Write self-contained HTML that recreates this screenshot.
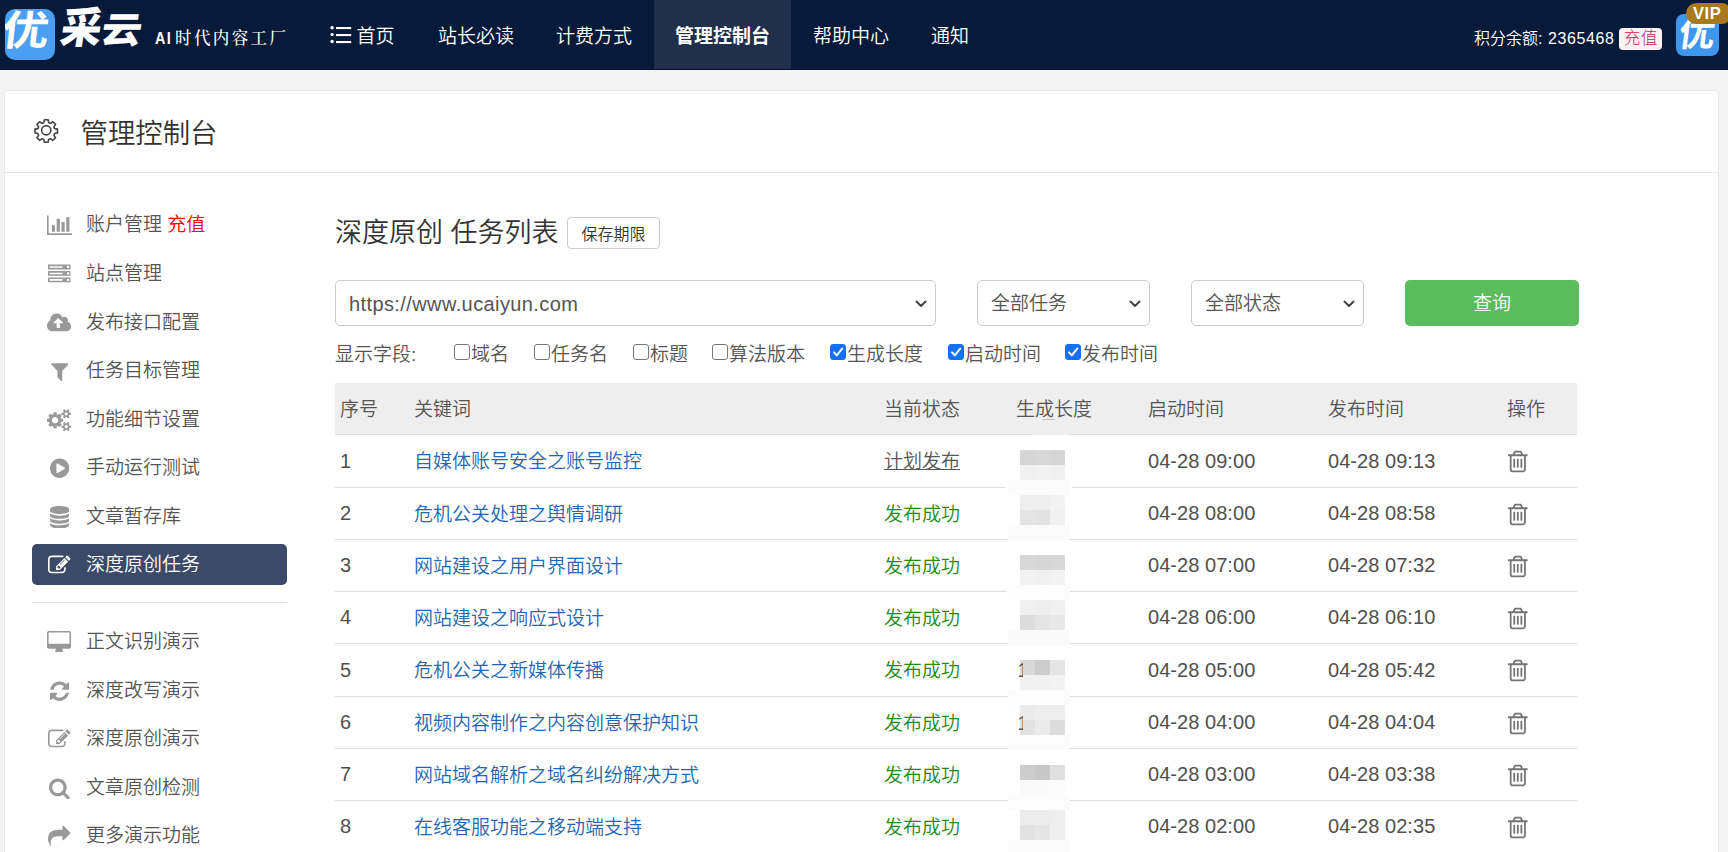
<!DOCTYPE html>
<html lang="zh-CN">
<head>
<meta charset="utf-8">
<title>管理控制台</title>
<style>
*{box-sizing:border-box;}
html,body{margin:0;padding:0;}
body{font-weight:350;width:1728px;height:852px;overflow:hidden;background:#f3f3f3;font-family:"Liberation Sans","Noto Sans CJK SC",sans-serif;color:#333;position:relative;}
a{text-decoration:none;color:inherit;}
/* NAV */
#nav{position:absolute;left:0;top:0;width:1728px;height:70px;background:#081a39;border-bottom:1px solid #04102d;}
.brush{font-family:"Liberation Sans","Noto Sans CJK SC",sans-serif;font-weight:900;color:#fff;white-space:nowrap;}
#logo-box{position:absolute;left:5px;top:9px;width:49.5px;height:51px;border-radius:10px;background:#4a9ff2;overflow:hidden;}
#logo-box span{position:absolute;left:0.3px;top:-8.5px;font-size:41px;font-weight:700;line-height:60px;transform:skewX(-6deg) scaleX(1.14);transform-origin:50% 50%;}
#lt1{position:absolute;left:56px;top:-0.5px;font-size:41px;line-height:60px;transform:skewX(-9deg) scaleY(1.04);transform-origin:0 100%;}
#lt2{position:absolute;left:96.5px;top:0.5px;font-size:36px;line-height:60px;transform:skewX(-9deg) scaleX(1.12);transform-origin:0 100%;}
#slogan{position:absolute;left:155px;top:27.5px;color:#fff;font-family:"Liberation Serif","Noto Serif CJK SC",serif;font-weight:500;font-size:16.5px;line-height:22px;letter-spacing:2.4px;white-space:nowrap;}
#slogan span{display:inline-block;width:20px;font-size:16px;font-family:"Liberation Sans",sans-serif;font-weight:bold;letter-spacing:1.6px;transform:scaleX(0.9);transform-origin:0 50%;}
.nv{position:absolute;top:0;height:69px;line-height:69px;padding-top:1.6px;color:#fff;font-size:19px;white-space:nowrap;}
.nv.act{background:#1f2f4c;font-weight:bold;text-align:center;}
#menuic{position:absolute;left:330px;top:25px;width:22px;height:20px;}
#bal{position:absolute;left:1474px;top:25px;color:#fff;font-size:16px;line-height:28px;white-space:nowrap;}
#bal span{letter-spacing:0.6px;margin-left:1px;}
#cz{position:absolute;left:1619.2px;top:28px;width:42.8px;height:21.7px;border-radius:4px;background:#f9f2f4;color:#c7254e;font-size:16.5px;font-weight:300;line-height:21.7px;text-align:center;letter-spacing:0.6px;padding-left:0.6px;}
#ava{position:absolute;left:1676.3px;top:13.7px;width:42.4px;height:42.6px;border-radius:8px;background:#3e97ee;overflow:hidden;}
#ava span{position:absolute;left:3px;top:-8px;font-size:36px;font-weight:700;line-height:56px;transform:skewX(-7deg);}
#vip{position:absolute;left:1686px;top:2.7px;width:46px;height:21.3px;border-radius:11px;background:#a87a1c;color:#fff;font-size:16.5px;font-weight:bold;line-height:21.3px;text-align:left;padding-left:7px;letter-spacing:0.6px;}
/* PANEL */
#panel{position:absolute;left:5px;top:91px;width:1713px;height:780px;background:#fff;box-shadow:0 0 0 1px #e8e8e8;border-radius:4px;}
#pg{position:absolute;left:0;top:0;width:1728px;height:852px;overflow:hidden;}
#phead{position:absolute;left:5px;top:91px;width:1713px;height:82px;border-bottom:1px solid #e7e7e7;}
#gear{position:absolute;left:32.5px;top:116.8px;width:26.5px;height:26.5px;}
#ptitle{position:absolute;left:80.5px;top:113.8px;font-size:27.4px;line-height:40px;color:#333;white-space:nowrap;}
/* SIDEBAR */
.si{position:absolute;left:32px;width:255px;height:41px;border-radius:5px;font-size:19px;line-height:41px;color:#555;white-space:nowrap;}
.si span.t{position:absolute;left:54px;top:0;}
.ic{position:absolute;fill:#999;}
.si.act{background:#3a4a68;color:#fff;}
.si.act svg{fill:#fff;}
.si .red{color:#f00;}
#shr{position:absolute;left:32px;top:601.5px;width:255px;height:1px;background:#ddd;}
/* MAIN */
#mt{position:absolute;left:335px;top:213px;font-size:27px;line-height:40px;color:#333;white-space:nowrap;}
#bx{position:absolute;left:567px;top:217px;width:93px;height:32px;border:1px solid #ccc;border-radius:4px;font-size:16px;line-height:33px;text-align:center;color:#333;background:#fff;}
.sel{position:absolute;top:280px;height:46px;border:1px solid #ccc;border-radius:5px;font-size:19px;line-height:46px;padding-left:13px;color:#555;background:#fff;white-space:nowrap;}
.sel svg{position:absolute;right:7.7px;top:17.7px;width:12px;height:10px;}
.lat{font-size:20px;letter-spacing:0.4px;}
#qbtn{position:absolute;left:1405px;top:280px;width:174px;height:46px;border-radius:5px;background:#5cbb5c;color:#fff;font-size:19px;line-height:48.5px;text-align:center;}
#flds{position:absolute;left:335px;top:340px;height:30px;font-size:19px;line-height:30px;color:#555;white-space:nowrap;}
#flds span{position:absolute;top:0;}
.cb{position:absolute;top:4px;width:16px;height:16px;border:1.5px solid #767676;border-radius:3px;background:#fff;}
.cb.on{background:#1470f6;border-color:#1470f6;}
.cb.on svg{position:absolute;left:-0.5px;top:-0.5px;width:14px;height:14px;}
/* TABLE */
#th{position:absolute;left:335px;top:383px;width:1242px;height:52px;background:#eee;border-bottom:1px solid #ddd;font-size:19px;line-height:53px;color:#555;}
.tr{position:absolute;left:335px;width:1242px;border-bottom:1px solid #ddd;font-size:19px;color:#444;}
.c{position:absolute;top:0;white-space:nowrap;}
.c1{left:5px;}.c2{left:79px;}.c3{left:549px;}.c4{left:681px;}.c5{left:813px;}.c6{left:993px;}.c7{left:1172px;}
.tr .c2{color:#2466b2;}
.tr .c1,.tr .c5,.tr .c6{font-size:20px;letter-spacing:0.05px;color:#505050;margin-top:-1px;}
.ok{color:#1f8a14;}
.plan{color:#555;text-decoration:underline;}
.mz{position:absolute;}
</style>
</head>
<body>
<div id="nav">
  <div id="logo-box"><span class="brush">优</span></div>
  <div id="lt1" class="brush">采</div><div id="lt2" class="brush">云</div>
  <div id="slogan"><span>AI</span>时代内容工厂</div>
  <svg id="menuic" viewBox="0 0 22 20" fill="#fff"><circle cx="2.1" cy="2.7" r="1.7"/><circle cx="2.1" cy="9.6" r="1.7"/><circle cx="2.1" cy="16.5" r="1.7"/><rect x="6" y="2" width="15.2" height="2.1"/><rect x="6" y="9" width="15.2" height="2.1"/><rect x="6" y="16" width="15.2" height="2.1"/></svg>
  <div class="nv" style="left:356.5px">首页</div>
  <div class="nv" style="left:438px">站长必读</div>
  <div class="nv" style="left:556px">计费方式</div>
  <div class="nv act" style="left:654px;width:137px">管理控制台</div>
  <div class="nv" style="left:813px">帮助中心</div>
  <div class="nv" style="left:931px">通知</div>
  <div id="bal">积分余额: <span>2365468</span></div>
  <div id="cz">充值</div>
  <div id="ava"><span class="brush">优</span></div>
  <div id="vip">VIP</div>
</div>
<div id="panel"></div>
<div id="pg">
  <div id="phead"></div>
  <svg id="gear" viewBox="0 0 24 24" fill="none" stroke="#444" stroke-width="1.45"><circle cx="12" cy="12" r="4.2"/><path d="M10.3 2.5h3.4l.5 2.6 1.6.7 2.2-1.5 2.4 2.4-1.5 2.2.7 1.6 2.6.5v3.4l-2.6.5-.7 1.6 1.5 2.2-2.4 2.4-2.2-1.5-1.6.7-.5 2.6h-3.4l-.5-2.6-1.6-.7-2.2 1.5-2.4-2.4 1.5-2.2-.7-1.6-2.6-.5v-3.4l2.6-.5.7-1.6-1.5-2.2 2.4-2.4 2.2 1.5 1.6-.7z" stroke-linejoin="round"/></svg>
  <div id="ptitle">管理控制台</div>
  <div class="si" style="top:203.5px"><svg class="ic " style="left:14.54px;top:10.11px;width:25.71px;height:22.50px;" viewBox="0 -1536 2048 1792"><path transform="scale(1,-1)" d="M640 640H384V128H640ZM1024 1152H768V128H1024ZM2048 0H128V1408H0V-128H2048ZM1408 896H1152V128H1408ZM1792 1280H1536V128H1792Z"/></svg><span class="t">账户管理 <span class="red">充值</span></span></div>
<div class="si" style="top:252.5px"><svg class="ic " style="left:16.15px;top:10.11px;width:22.50px;height:22.50px;" viewBox="0 -1536 1792 1792"><path transform="scale(1,-1)" d="M128 128V256H1152V128ZM128 640V768H1152V640ZM1696 192C1696 139 1653 96 1600 96C1547 96 1504 139 1504 192C1504 245 1547 288 1600 288C1653 288 1696 245 1696 192ZM128 1152V1280H1152V1152ZM1696 704C1696 651 1653 608 1600 608C1547 608 1504 651 1504 704C1504 757 1547 800 1600 800C1653 800 1696 757 1696 704ZM1696 1216C1696 1163 1653 1120 1600 1120C1547 1120 1504 1163 1504 1216C1504 1269 1547 1312 1600 1312C1653 1312 1696 1269 1696 1216ZM1792 384H0V0H1792ZM1792 896H0V512H1792ZM1792 1408H0V1024H1792Z"/></svg><span class="t">站点管理</span></div>
<div class="si" style="top:301.5px"><svg class="ic " style="left:15.35px;top:10.11px;width:24.11px;height:22.50px;" viewBox="0 -1536 1920 1792"><path transform="scale(1,-1)" d="M1280 672C1280 655 1266 640 1248 640H1024V288C1024 271 1009 256 992 256H800C783 256 768 271 768 288V640H544C526 640 512 654 512 672C512 681 516 689 522 696L873 1047C879 1053 888 1056 896 1056C905 1056 913 1053 919 1047L1271 695C1277 689 1280 680 1280 672ZM1920 384C1920 562 1797 717 1623 758C1650 799 1664 847 1664 896C1664 1037 1549 1152 1408 1152C1347 1152 1288 1130 1242 1090C1163 1282 976 1408 768 1408C485 1408 256 1179 256 896C256 882 257 868 258 853C101 780 0 622 0 448C0 201 201 0 448 0H1536C1748 0 1920 172 1920 384Z"/></svg><span class="t">发布接口配置</span></div>
<div class="si" style="top:349.5px"><svg class="ic " style="left:18.56px;top:10.11px;width:17.68px;height:22.50px;" viewBox="0 -1536 1408 1792"><path transform="scale(1,-1)" d="M1403 1241C1393 1264 1370 1280 1344 1280H64C38 1280 15 1264 5 1241C-5 1217 0 1189 19 1171L512 678V192C512 175 519 159 531 147L787 -109C799 -122 815 -128 832 -128C840 -128 849 -126 857 -123C880 -113 896 -90 896 -64V678L1389 1171C1408 1189 1413 1217 1403 1241Z"/></svg><span class="t">任务目标管理</span></div>
<div class="si" style="top:398.5px"><svg class="ic " style="left:15.35px;top:10.11px;width:24.11px;height:22.50px;" viewBox="0 -1536 1920 1792"><path transform="scale(1,-1)" d="M896 640C896 499 781 384 640 384C499 384 384 499 384 640C384 781 499 896 640 896C781 896 896 781 896 640ZM1664 128C1664 58 1607 0 1536 0C1466 0 1408 57 1408 128C1408 198 1466 256 1536 256C1606 256 1664 198 1664 128ZM1664 1152C1664 1082 1607 1024 1536 1024C1466 1024 1408 1081 1408 1152C1408 1222 1466 1280 1536 1280C1606 1280 1664 1222 1664 1152ZM1280 731C1280 745 1270 758 1256 761L1104 784C1095 812 1083 839 1070 866C1098 905 1128 941 1157 980C1161 986 1164 992 1164 999C1164 1027 1046 1135 1020 1159C1014 1164 1007 1167 999 1167C992 1167 985 1165 979 1160L861 1071C837 1083 812 1094 786 1102L763 1255C761 1269 747 1280 733 1280H547C533 1280 521 1270 517 1256C504 1207 499 1152 494 1102C467 1093 442 1083 417 1070L302 1160C296 1164 289 1167 281 1167C252 1167 140 1046 120 1019C115 1013 113 1006 113 999C113 992 116 985 120 979C152 941 182 904 210 864C197 839 186 814 178 788L23 764C10 762 0 747 0 734V549C0 535 10 522 24 520L176 496C185 468 197 441 211 414C182 375 152 338 123 300C119 294 116 288 116 281C116 252 234 145 260 121C266 116 273 113 281 113C288 113 296 115 301 120L419 209C443 197 468 186 494 178L517 25C519 11 533 0 547 0H733C747 0 759 10 763 24C776 73 781 128 786 179C813 187 838 197 863 210L978 120C984 116 991 113 999 113C1028 113 1140 235 1160 262C1165 267 1167 274 1167 281C1167 289 1164 295 1160 301C1128 339 1098 376 1070 416C1083 441 1094 466 1102 492L1257 516C1270 518 1280 533 1280 546ZM1920 198C1920 213 1791 227 1771 229C1763 247 1753 265 1741 281C1750 301 1792 401 1792 419C1792 421 1791 424 1788 426C1776 433 1669 496 1664 496L1658 494C1624 460 1594 421 1566 382C1556 383 1546 384 1536 384C1526 384 1516 383 1506 382C1496 397 1421 496 1408 496C1403 496 1296 432 1284 426C1281 424 1280 421 1280 419C1280 402 1322 301 1331 281C1319 265 1309 247 1301 229C1281 227 1152 213 1152 198V58C1152 43 1281 29 1301 27C1309 8 1319 -9 1331 -25C1322 -45 1280 -146 1280 -163C1280 -165 1281 -168 1284 -170C1296 -177 1403 -241 1408 -241C1421 -241 1496 -141 1506 -126C1516 -127 1526 -128 1536 -128C1546 -128 1556 -127 1566 -126C1576 -141 1651 -241 1664 -241C1669 -241 1776 -177 1788 -170C1791 -168 1792 -166 1792 -163C1792 -145 1750 -45 1741 -25C1753 -9 1763 8 1771 27C1791 29 1920 43 1920 58ZM1920 1222C1920 1237 1791 1251 1771 1253C1763 1271 1753 1289 1741 1305C1750 1325 1792 1425 1792 1443C1792 1445 1791 1448 1788 1450C1776 1457 1669 1520 1664 1520L1658 1518C1624 1484 1594 1445 1566 1406C1556 1407 1546 1408 1536 1408C1526 1408 1516 1407 1506 1406C1496 1421 1421 1520 1408 1520C1403 1520 1296 1456 1284 1450C1281 1448 1280 1445 1280 1443C1280 1426 1322 1325 1331 1305C1319 1289 1309 1271 1301 1253C1281 1251 1152 1237 1152 1222V1082C1152 1067 1281 1053 1301 1051C1309 1032 1319 1015 1331 999C1322 979 1280 878 1280 861C1280 859 1281 856 1284 854C1296 847 1403 783 1408 783C1421 783 1496 883 1506 898C1516 897 1526 896 1536 896C1546 896 1556 897 1566 898C1576 883 1651 783 1664 783C1669 783 1776 847 1788 854C1791 856 1792 858 1792 861C1792 879 1750 979 1741 999C1753 1015 1763 1032 1771 1051C1791 1053 1920 1067 1920 1082Z"/></svg><span class="t">功能细节设置</span></div>
<div class="si" style="top:446.5px"><svg class="ic " style="left:17.76px;top:10.11px;width:19.29px;height:22.50px;" viewBox="0 -1536 1536 1792"><path transform="scale(1,-1)" d="M768 1408C344 1408 0 1064 0 640C0 216 344 -128 768 -128C1192 -128 1536 216 1536 640C1536 1064 1192 1408 768 1408ZM1152 585 608 265C598 259 587 256 576 256C565 256 554 259 544 264C524 276 512 297 512 320V960C512 983 524 1004 544 1016C564 1027 589 1027 608 1015L1152 695C1172 684 1184 663 1184 640C1184 617 1172 596 1152 585Z"/></svg><span class="t">手动运行测试</span></div>
<div class="si" style="top:495.5px"><svg class="ic " style="left:17.76px;top:10.11px;width:19.29px;height:22.50px;" viewBox="0 -1536 1536 1792"><path transform="scale(1,-1)" d="M768 768C467 768 165 822 0 938V768C0 627 344 512 768 512C1192 512 1536 627 1536 768V938C1371 822 1069 768 768 768ZM768 0C467 0 165 54 0 170V0C0 -141 344 -256 768 -256C1192 -256 1536 -141 1536 0V170C1371 54 1069 0 768 0ZM768 384C467 384 165 438 0 554V384C0 243 344 128 768 128C1192 128 1536 243 1536 384V554C1371 438 1069 384 768 384ZM768 1536C344 1536 0 1421 0 1280V1152C0 1011 344 896 768 896C1192 896 1536 1011 1536 1152V1280C1536 1421 1192 1536 768 1536Z"/></svg><span class="t">文章暂存库</span></div>
<div class="si act" style="top:544.0px"><svg class="ic " style="left:16.15px;top:10.11px;width:22.50px;height:22.50px;" viewBox="0 -1536 1792 1792"><path transform="scale(1,-1)" d="M888 352H832V448H736V504L852 620L1004 468ZM1328 1072C1337 1063 1336 1048 1327 1039L977 689C968 680 953 679 944 688C935 697 936 712 945 721L1295 1071C1304 1080 1319 1081 1328 1072ZM1408 478C1408 491 1400 502 1388 507C1376 512 1363 510 1353 500L1289 436C1283 430 1280 422 1280 414V288C1280 200 1208 128 1120 128H288C200 128 128 200 128 288V1120C128 1208 200 1280 288 1280H1120C1135 1280 1150 1278 1165 1274C1176 1270 1188 1273 1197 1282L1246 1331C1254 1339 1257 1349 1255 1360C1253 1370 1246 1379 1237 1383C1200 1400 1160 1408 1120 1408H288C129 1408 0 1279 0 1120V288C0 129 129 0 288 0H1120C1279 0 1408 129 1408 288ZM1312 1216 640 544V256H928L1600 928ZM1756 1084C1793 1121 1793 1183 1756 1220L1604 1372C1567 1409 1505 1409 1468 1372L1376 1280L1664 992L1756 1084Z"/></svg><span class="t">深度原创任务</span></div>
<div class="si" style="top:620.5px"><svg class="ic " style="left:15.35px;top:10.11px;width:24.11px;height:22.50px;" viewBox="0 -1536 1920 1792"><path transform="scale(1,-1)" d="M1792 544C1792 527 1777 512 1760 512H160C143 512 128 527 128 544V1376C128 1393 143 1408 160 1408H1760C1777 1408 1792 1393 1792 1376V544ZM1920 1376C1920 1464 1848 1536 1760 1536H160C72 1536 0 1464 0 1376V288C0 200 72 128 160 128H704C704 41 640 -27 640 -64C640 -99 669 -128 704 -128H1216C1251 -128 1280 -99 1280 -64C1280 -29 1216 43 1216 128H1760C1848 128 1920 200 1920 288Z"/></svg><span class="t">正文识别演示</span></div>
<div class="si" style="top:669.5px"><svg class="ic " style="left:17.76px;top:10.11px;width:19.29px;height:22.50px;" viewBox="0 -1536 1536 1792"><path transform="scale(1,-1)" d="M1511 480C1511 497 1497 512 1479 512H1287C1272 512 1262 503 1257 489C1240 449 1228 411 1204 372C1111 220 946 128 768 128C639 128 514 178 420 266L557 403C569 415 576 431 576 448C576 483 547 512 512 512H64C29 512 0 483 0 448V0C0 -35 29 -64 64 -64C81 -64 97 -57 109 -45L238 84C380 -51 569 -128 764 -128C1133 -128 1425 119 1510 473C1511 475 1511 478 1511 480ZM1536 1280C1536 1315 1507 1344 1472 1344C1455 1344 1439 1337 1427 1325L1297 1196C1155 1330 964 1408 768 1408C399 1408 104 1162 18 807C18 805 18 802 18 800C18 783 32 768 50 768H249C264 768 274 777 279 791C296 831 308 869 332 908C425 1060 590 1152 768 1152C897 1152 1022 1103 1117 1015L979 877C967 865 960 849 960 832C960 797 989 768 1024 768H1472C1507 768 1536 797 1536 832Z"/></svg><span class="t">深度改写演示</span></div>
<div class="si" style="top:717.5px"><svg class="ic " style="left:16.15px;top:10.11px;width:22.50px;height:22.50px;" viewBox="0 -1536 1792 1792"><path transform="scale(1,-1)" d="M888 352H832V448H736V504L852 620L1004 468ZM1328 1072C1337 1063 1336 1048 1327 1039L977 689C968 680 953 679 944 688C935 697 936 712 945 721L1295 1071C1304 1080 1319 1081 1328 1072ZM1408 478C1408 491 1400 502 1388 507C1376 512 1363 510 1353 500L1289 436C1283 430 1280 422 1280 414V288C1280 200 1208 128 1120 128H288C200 128 128 200 128 288V1120C128 1208 200 1280 288 1280H1120C1135 1280 1150 1278 1165 1274C1176 1270 1188 1273 1197 1282L1246 1331C1254 1339 1257 1349 1255 1360C1253 1370 1246 1379 1237 1383C1200 1400 1160 1408 1120 1408H288C129 1408 0 1279 0 1120V288C0 129 129 0 288 0H1120C1279 0 1408 129 1408 288ZM1312 1216 640 544V256H928L1600 928ZM1756 1084C1793 1121 1793 1183 1756 1220L1604 1372C1567 1409 1505 1409 1468 1372L1376 1280L1664 992L1756 1084Z"/></svg><span class="t">深度原创演示</span></div>
<div class="si" style="top:766.5px"><svg class="ic " style="left:16.95px;top:10.11px;width:20.89px;height:22.50px;" viewBox="0 -1536 1664 1792"><path transform="scale(1,-1)" d="M1152 704C1152 457 951 256 704 256C457 256 256 457 256 704C256 951 457 1152 704 1152C951 1152 1152 951 1152 704ZM1664 -128C1664 -94 1650 -61 1627 -38L1284 305C1365 422 1408 562 1408 704C1408 1093 1093 1408 704 1408C315 1408 0 1093 0 704C0 315 315 0 704 0C846 0 986 43 1103 124L1446 -218C1469 -242 1502 -256 1536 -256C1606 -256 1664 -198 1664 -128Z"/></svg><span class="t">文章原创检测</span></div>
<div class="si" style="top:814.5px"><svg class="ic " style="left:16.15px;top:10.11px;width:22.50px;height:22.50px;" viewBox="0 -1536 1792 1792"><path transform="scale(1,-1)" d="M1792 896C1792 913 1785 929 1773 941L1261 1453C1249 1465 1233 1472 1216 1472C1181 1472 1152 1443 1152 1408V1152H928C600 1152 192 1094 53 749C11 643 0 528 0 416C0 276 70 93 127 -35C138 -58 149 -90 164 -111C171 -121 178 -128 192 -128C212 -128 224 -112 224 -93C224 -77 220 -59 219 -43C216 -2 214 39 214 80C214 557 497 640 928 640H1152V384C1152 349 1181 320 1216 320C1233 320 1249 327 1261 339L1773 851C1785 863 1792 879 1792 896Z"/></svg><span class="t">更多演示功能</span></div>
<div id="shr"></div>
  <div id="mt">深度原创 任务列表</div><div id="bx">保存期限</div>
<div class="sel" style="left:335px;width:601px"><span class="lat">https://www.ucaiyun.com</span><svg viewBox="0 0 12 10"><path d="M1.5 2.5 L6 7 L10.5 2.5" fill="none" stroke="#444" stroke-width="2" stroke-linecap="round" stroke-linejoin="round"/></svg></div>
<div class="sel" style="left:977px;width:173px">全部任务<svg viewBox="0 0 12 10"><path d="M1.5 2.5 L6 7 L10.5 2.5" fill="none" stroke="#444" stroke-width="2" stroke-linecap="round" stroke-linejoin="round"/></svg></div>
<div class="sel" style="left:1191px;width:173px">全部状态<svg viewBox="0 0 12 10"><path d="M1.5 2.5 L6 7 L10.5 2.5" fill="none" stroke="#444" stroke-width="2" stroke-linecap="round" stroke-linejoin="round"/></svg></div>
<div id="qbtn">查询</div>
<div id="flds"><span style="left:0">显示字段:</span><div class="cb" style="left:119px"></div><span style="left:136px">域名</span><div class="cb" style="left:199px"></div><span style="left:216px">任务名</span><div class="cb" style="left:298px"></div><span style="left:315px">标题</span><div class="cb" style="left:377px"></div><span style="left:394px">算法版本</span><div class="cb on" style="left:495px"><svg viewBox="0 0 14 14"><path d="M3 7.4 L5.8 10.3 L11.2 3.6" fill="none" stroke="#fff" stroke-width="2" stroke-linecap="round" stroke-linejoin="round"/></svg></div><span style="left:512px">生成长度</span><div class="cb on" style="left:613px"><svg viewBox="0 0 14 14"><path d="M3 7.4 L5.8 10.3 L11.2 3.6" fill="none" stroke="#fff" stroke-width="2" stroke-linecap="round" stroke-linejoin="round"/></svg></div><span style="left:630px">启动时间</span><div class="cb on" style="left:730px"><svg viewBox="0 0 14 14"><path d="M3 7.4 L5.8 10.3 L11.2 3.6" fill="none" stroke="#fff" stroke-width="2" stroke-linecap="round" stroke-linejoin="round"/></svg></div><span style="left:747px">发布时间</span></div>
<div id="th"><span class="c c1">序号</span><span class="c c2">关键词</span><span class="c c3">当前状态</span><span class="c c4">生成长度</span><span class="c c5">启动时间</span><span class="c c6">发布时间</span><span class="c c7">操作</span></div><div class="tr" style="top:435px;height:53px;line-height:54px"><span class="c c1">1</span><a class="c c2">自媒体账号安全之账号监控</a><span class="c c3 plan">计划发布</span><span class="c c5">04-28 09:00</span><span class="c c6">04-28 09:13</span><svg class="ic del" style="left:1173.18px;top:14.07px;width:19.64px;height:25.00px;fill:#747474;" viewBox="0 -1536 1408 1792"><path transform="scale(1,-1)" d="M512 800C512 818 498 832 480 832H416C398 832 384 818 384 800V224C384 206 398 192 416 192H480C498 192 512 206 512 224ZM768 800C768 818 754 832 736 832H672C654 832 640 818 640 800V224C640 206 654 192 672 192H736C754 192 768 206 768 224ZM1024 800C1024 818 1010 832 992 832H928C910 832 896 818 896 800V224C896 206 910 192 928 192H992C1010 192 1024 206 1024 224ZM1152 76C1152 28 1125 0 1120 0H288C283 0 256 28 256 76V1024H1152V76ZM480 1152 529 1269C532 1273 540 1279 546 1280H863C868 1279 877 1273 880 1269L928 1152ZM1408 1120C1408 1138 1394 1152 1376 1152H1067L997 1319C977 1368 917 1408 864 1408H544C491 1408 431 1368 411 1319L341 1152H32C14 1152 0 1138 0 1120V1056C0 1038 14 1024 32 1024H128V72C128 -38 200 -128 288 -128H1120C1208 -128 1280 -34 1280 76V1024H1376C1394 1024 1408 1038 1408 1056Z"/></svg></div><div class="tr" style="top:488px;height:52px;line-height:53px"><span class="c c1">2</span><a class="c c2">危机公关处理之舆情调研</a><span class="c c3 ok">发布成功</span><span class="c c5">04-28 08:00</span><span class="c c6">04-28 08:58</span><svg class="ic del" style="left:1173.18px;top:14.07px;width:19.64px;height:25.00px;fill:#747474;" viewBox="0 -1536 1408 1792"><path transform="scale(1,-1)" d="M512 800C512 818 498 832 480 832H416C398 832 384 818 384 800V224C384 206 398 192 416 192H480C498 192 512 206 512 224ZM768 800C768 818 754 832 736 832H672C654 832 640 818 640 800V224C640 206 654 192 672 192H736C754 192 768 206 768 224ZM1024 800C1024 818 1010 832 992 832H928C910 832 896 818 896 800V224C896 206 910 192 928 192H992C1010 192 1024 206 1024 224ZM1152 76C1152 28 1125 0 1120 0H288C283 0 256 28 256 76V1024H1152V76ZM480 1152 529 1269C532 1273 540 1279 546 1280H863C868 1279 877 1273 880 1269L928 1152ZM1408 1120C1408 1138 1394 1152 1376 1152H1067L997 1319C977 1368 917 1408 864 1408H544C491 1408 431 1368 411 1319L341 1152H32C14 1152 0 1138 0 1120V1056C0 1038 14 1024 32 1024H128V72C128 -38 200 -128 288 -128H1120C1208 -128 1280 -34 1280 76V1024H1376C1394 1024 1408 1038 1408 1056Z"/></svg></div><div class="tr" style="top:540px;height:52px;line-height:53px"><span class="c c1">3</span><a class="c c2">网站建设之用户界面设计</a><span class="c c3 ok">发布成功</span><span class="c c5">04-28 07:00</span><span class="c c6">04-28 07:32</span><svg class="ic del" style="left:1173.18px;top:14.07px;width:19.64px;height:25.00px;fill:#747474;" viewBox="0 -1536 1408 1792"><path transform="scale(1,-1)" d="M512 800C512 818 498 832 480 832H416C398 832 384 818 384 800V224C384 206 398 192 416 192H480C498 192 512 206 512 224ZM768 800C768 818 754 832 736 832H672C654 832 640 818 640 800V224C640 206 654 192 672 192H736C754 192 768 206 768 224ZM1024 800C1024 818 1010 832 992 832H928C910 832 896 818 896 800V224C896 206 910 192 928 192H992C1010 192 1024 206 1024 224ZM1152 76C1152 28 1125 0 1120 0H288C283 0 256 28 256 76V1024H1152V76ZM480 1152 529 1269C532 1273 540 1279 546 1280H863C868 1279 877 1273 880 1269L928 1152ZM1408 1120C1408 1138 1394 1152 1376 1152H1067L997 1319C977 1368 917 1408 864 1408H544C491 1408 431 1368 411 1319L341 1152H32C14 1152 0 1138 0 1120V1056C0 1038 14 1024 32 1024H128V72C128 -38 200 -128 288 -128H1120C1208 -128 1280 -34 1280 76V1024H1376C1394 1024 1408 1038 1408 1056Z"/></svg></div><div class="tr" style="top:592px;height:52px;line-height:53px"><span class="c c1">4</span><a class="c c2">网站建设之响应式设计</a><span class="c c3 ok">发布成功</span><span class="c c5">04-28 06:00</span><span class="c c6">04-28 06:10</span><svg class="ic del" style="left:1173.18px;top:14.07px;width:19.64px;height:25.00px;fill:#747474;" viewBox="0 -1536 1408 1792"><path transform="scale(1,-1)" d="M512 800C512 818 498 832 480 832H416C398 832 384 818 384 800V224C384 206 398 192 416 192H480C498 192 512 206 512 224ZM768 800C768 818 754 832 736 832H672C654 832 640 818 640 800V224C640 206 654 192 672 192H736C754 192 768 206 768 224ZM1024 800C1024 818 1010 832 992 832H928C910 832 896 818 896 800V224C896 206 910 192 928 192H992C1010 192 1024 206 1024 224ZM1152 76C1152 28 1125 0 1120 0H288C283 0 256 28 256 76V1024H1152V76ZM480 1152 529 1269C532 1273 540 1279 546 1280H863C868 1279 877 1273 880 1269L928 1152ZM1408 1120C1408 1138 1394 1152 1376 1152H1067L997 1319C977 1368 917 1408 864 1408H544C491 1408 431 1368 411 1319L341 1152H32C14 1152 0 1138 0 1120V1056C0 1038 14 1024 32 1024H128V72C128 -38 200 -128 288 -128H1120C1208 -128 1280 -34 1280 76V1024H1376C1394 1024 1408 1038 1408 1056Z"/></svg></div><div class="tr" style="top:644px;height:53px;line-height:54px"><span class="c c1">5</span><a class="c c2">危机公关之新媒体传播</a><span class="c c3 ok">发布成功</span><span class="c c5">04-28 05:00</span><span class="c c6">04-28 05:42</span><svg class="ic del" style="left:1173.18px;top:14.07px;width:19.64px;height:25.00px;fill:#747474;" viewBox="0 -1536 1408 1792"><path transform="scale(1,-1)" d="M512 800C512 818 498 832 480 832H416C398 832 384 818 384 800V224C384 206 398 192 416 192H480C498 192 512 206 512 224ZM768 800C768 818 754 832 736 832H672C654 832 640 818 640 800V224C640 206 654 192 672 192H736C754 192 768 206 768 224ZM1024 800C1024 818 1010 832 992 832H928C910 832 896 818 896 800V224C896 206 910 192 928 192H992C1010 192 1024 206 1024 224ZM1152 76C1152 28 1125 0 1120 0H288C283 0 256 28 256 76V1024H1152V76ZM480 1152 529 1269C532 1273 540 1279 546 1280H863C868 1279 877 1273 880 1269L928 1152ZM1408 1120C1408 1138 1394 1152 1376 1152H1067L997 1319C977 1368 917 1408 864 1408H544C491 1408 431 1368 411 1319L341 1152H32C14 1152 0 1138 0 1120V1056C0 1038 14 1024 32 1024H128V72C128 -38 200 -128 288 -128H1120C1208 -128 1280 -34 1280 76V1024H1376C1394 1024 1408 1038 1408 1056Z"/></svg></div><div class="tr" style="top:697px;height:52px;line-height:53px"><span class="c c1">6</span><a class="c c2">视频内容制作之内容创意保护知识</a><span class="c c3 ok">发布成功</span><span class="c c5">04-28 04:00</span><span class="c c6">04-28 04:04</span><svg class="ic del" style="left:1173.18px;top:14.07px;width:19.64px;height:25.00px;fill:#747474;" viewBox="0 -1536 1408 1792"><path transform="scale(1,-1)" d="M512 800C512 818 498 832 480 832H416C398 832 384 818 384 800V224C384 206 398 192 416 192H480C498 192 512 206 512 224ZM768 800C768 818 754 832 736 832H672C654 832 640 818 640 800V224C640 206 654 192 672 192H736C754 192 768 206 768 224ZM1024 800C1024 818 1010 832 992 832H928C910 832 896 818 896 800V224C896 206 910 192 928 192H992C1010 192 1024 206 1024 224ZM1152 76C1152 28 1125 0 1120 0H288C283 0 256 28 256 76V1024H1152V76ZM480 1152 529 1269C532 1273 540 1279 546 1280H863C868 1279 877 1273 880 1269L928 1152ZM1408 1120C1408 1138 1394 1152 1376 1152H1067L997 1319C977 1368 917 1408 864 1408H544C491 1408 431 1368 411 1319L341 1152H32C14 1152 0 1138 0 1120V1056C0 1038 14 1024 32 1024H128V72C128 -38 200 -128 288 -128H1120C1208 -128 1280 -34 1280 76V1024H1376C1394 1024 1408 1038 1408 1056Z"/></svg></div><div class="tr" style="top:749px;height:52px;line-height:53px"><span class="c c1">7</span><a class="c c2">网站域名解析之域名纠纷解决方式</a><span class="c c3 ok">发布成功</span><span class="c c5">04-28 03:00</span><span class="c c6">04-28 03:38</span><svg class="ic del" style="left:1173.18px;top:14.07px;width:19.64px;height:25.00px;fill:#747474;" viewBox="0 -1536 1408 1792"><path transform="scale(1,-1)" d="M512 800C512 818 498 832 480 832H416C398 832 384 818 384 800V224C384 206 398 192 416 192H480C498 192 512 206 512 224ZM768 800C768 818 754 832 736 832H672C654 832 640 818 640 800V224C640 206 654 192 672 192H736C754 192 768 206 768 224ZM1024 800C1024 818 1010 832 992 832H928C910 832 896 818 896 800V224C896 206 910 192 928 192H992C1010 192 1024 206 1024 224ZM1152 76C1152 28 1125 0 1120 0H288C283 0 256 28 256 76V1024H1152V76ZM480 1152 529 1269C532 1273 540 1279 546 1280H863C868 1279 877 1273 880 1269L928 1152ZM1408 1120C1408 1138 1394 1152 1376 1152H1067L997 1319C977 1368 917 1408 864 1408H544C491 1408 431 1368 411 1319L341 1152H32C14 1152 0 1138 0 1120V1056C0 1038 14 1024 32 1024H128V72C128 -38 200 -128 288 -128H1120C1208 -128 1280 -34 1280 76V1024H1376C1394 1024 1408 1038 1408 1056Z"/></svg></div><div class="tr" style="top:801px;height:52px;line-height:53px"><span class="c c1">8</span><a class="c c2">在线客服功能之移动端支持</a><span class="c c3 ok">发布成功</span><span class="c c5">04-28 02:00</span><span class="c c6">04-28 02:35</span><svg class="ic del" style="left:1173.18px;top:14.07px;width:19.64px;height:25.00px;fill:#747474;" viewBox="0 -1536 1408 1792"><path transform="scale(1,-1)" d="M512 800C512 818 498 832 480 832H416C398 832 384 818 384 800V224C384 206 398 192 416 192H480C498 192 512 206 512 224ZM768 800C768 818 754 832 736 832H672C654 832 640 818 640 800V224C640 206 654 192 672 192H736C754 192 768 206 768 224ZM1024 800C1024 818 1010 832 992 832H928C910 832 896 818 896 800V224C896 206 910 192 928 192H992C1010 192 1024 206 1024 224ZM1152 76C1152 28 1125 0 1120 0H288C283 0 256 28 256 76V1024H1152V76ZM480 1152 529 1269C532 1273 540 1279 546 1280H863C868 1279 877 1273 880 1269L928 1152ZM1408 1120C1408 1138 1394 1152 1376 1152H1067L997 1319C977 1368 917 1408 864 1408H544C491 1408 431 1368 411 1319L341 1152H32C14 1152 0 1138 0 1120V1056C0 1038 14 1024 32 1024H128V72C128 -38 200 -128 288 -128H1120C1208 -128 1280 -34 1280 76V1024H1376C1394 1024 1408 1038 1408 1056Z"/></svg></div><div class="mz" style="left:1005px;top:485px;width:67px;height:5px;background:#fff"></div><div class="mz" style="left:1008px;top:537px;width:61px;height:5px;background:#fff"></div><div class="mz" style="left:1007px;top:589px;width:62px;height:5px;background:#fff"></div><div class="mz" style="left:1017px;top:641px;width:53px;height:5px;background:#fff"></div><div class="mz" style="left:1024px;top:694px;width:41px;height:5px;background:#fff"></div><div class="mz" style="left:1020px;top:746px;width:42px;height:5px;background:#fff"></div><div class="mz" style="left:1009px;top:798px;width:54px;height:5px;background:#fff"></div><div class="mz" style="left:1031px;top:427px;width:38px;height:8px;background:#eee"></div><div class="mz" style="left:1042px;top:419px;width:13px;height:1px;background:#c4c4c4"></div><div class="mz" style="left:1020px;top:450px;width:15px;height:15px;background:#d6d6d6"></div><div class="mz" style="left:1035px;top:450px;width:15px;height:15px;background:#d8d8d8"></div><div class="mz" style="left:1050px;top:450px;width:15px;height:15px;background:#d6d6d6"></div><div class="mz" style="left:1020px;top:465px;width:15px;height:15px;background:#f0f0f0"></div><div class="mz" style="left:1035px;top:465px;width:15px;height:15px;background:#f2f2f2"></div><div class="mz" style="left:1050px;top:465px;width:15px;height:15px;background:#f0f0f0"></div><div class="mz" style="left:1008px;top:480px;width:62px;height:15px;background:#fbfbfb"></div><div class="mz" style="left:1020px;top:495px;width:15px;height:15px;background:#eeeeee"></div><div class="mz" style="left:1035px;top:495px;width:15px;height:15px;background:#eeeeee"></div><div class="mz" style="left:1050px;top:495px;width:15px;height:15px;background:#f2f2f2"></div><div class="mz" style="left:1020px;top:510px;width:15px;height:15px;background:#e4e4e4"></div><div class="mz" style="left:1035px;top:510px;width:15px;height:15px;background:#e2e2e2"></div><div class="mz" style="left:1050px;top:510px;width:15px;height:15px;background:#f0f0f0"></div><div class="mz" style="left:1008px;top:525px;width:62px;height:15px;background:#fbfbfb"></div><div class="mz" style="left:1020px;top:555px;width:15px;height:15px;background:#d8d8d8"></div><div class="mz" style="left:1035px;top:555px;width:15px;height:15px;background:#d6d6d6"></div><div class="mz" style="left:1050px;top:555px;width:15px;height:15px;background:#d8d8d8"></div><div class="mz" style="left:1020px;top:570px;width:15px;height:15px;background:#f2f2f2"></div><div class="mz" style="left:1035px;top:570px;width:15px;height:15px;background:#f0f0f0"></div><div class="mz" style="left:1050px;top:570px;width:15px;height:15px;background:#f2f2f2"></div><div class="mz" style="left:1008px;top:585px;width:62px;height:15px;background:#fcfcfc"></div><div class="mz" style="left:1020px;top:600px;width:15px;height:15px;background:#f0f0f0"></div><div class="mz" style="left:1035px;top:600px;width:15px;height:15px;background:#eeeeee"></div><div class="mz" style="left:1050px;top:600px;width:15px;height:15px;background:#f0f0f0"></div><div class="mz" style="left:1020px;top:615px;width:15px;height:15px;background:#dcdcdc"></div><div class="mz" style="left:1035px;top:615px;width:15px;height:15px;background:#e4e4e4"></div><div class="mz" style="left:1050px;top:615px;width:15px;height:15px;background:#e8e8e8"></div><div class="mz" style="left:1008px;top:630px;width:62px;height:15px;background:#fafafa"></div><div class="mz" style="left:1020px;top:660px;width:15px;height:15px;background:#d8d8d8"></div><div class="mz" style="left:1035px;top:660px;width:15px;height:15px;background:#cccccc"></div><div class="mz" style="left:1050px;top:660px;width:15px;height:15px;background:#e4e4e4"></div><div class="mz" style="left:1020px;top:675px;width:15px;height:15px;background:#f0f0f0"></div><div class="mz" style="left:1035px;top:675px;width:15px;height:15px;background:#f0f0f0"></div><div class="mz" style="left:1050px;top:675px;width:15px;height:15px;background:#f2f2f2"></div><div class="mz" style="left:1008px;top:690px;width:62px;height:15px;background:#fcfcfc"></div><div class="mz" style="left:1020px;top:705px;width:15px;height:15px;background:#ebebeb"></div><div class="mz" style="left:1035px;top:705px;width:15px;height:15px;background:#eeeeee"></div><div class="mz" style="left:1050px;top:705px;width:15px;height:15px;background:#eeeeee"></div><div class="mz" style="left:1020px;top:720px;width:15px;height:15px;background:#e2e2e2"></div><div class="mz" style="left:1035px;top:720px;width:15px;height:15px;background:#ebebeb"></div><div class="mz" style="left:1050px;top:720px;width:15px;height:15px;background:#dcdcdc"></div><div class="mz" style="left:1008px;top:735px;width:62px;height:15px;background:#fcfcfc"></div><div class="mz" style="left:1020px;top:765px;width:15px;height:15px;background:#cdcdcd"></div><div class="mz" style="left:1035px;top:765px;width:15px;height:15px;background:#c8c8c8"></div><div class="mz" style="left:1050px;top:765px;width:15px;height:15px;background:#e0e0e0"></div><div class="mz" style="left:1020px;top:780px;width:15px;height:15px;background:#fafafa"></div><div class="mz" style="left:1035px;top:780px;width:15px;height:15px;background:#fafafa"></div><div class="mz" style="left:1050px;top:780px;width:15px;height:15px;background:#fbfbfb"></div><div class="mz" style="left:1008px;top:795px;width:62px;height:15px;background:#fcfcfc"></div><div class="mz" style="left:1020px;top:810px;width:15px;height:15px;background:#ececec"></div><div class="mz" style="left:1035px;top:810px;width:15px;height:15px;background:#ececec"></div><div class="mz" style="left:1050px;top:810px;width:15px;height:15px;background:#eeeeee"></div><div class="mz" style="left:1020px;top:825px;width:15px;height:15px;background:#e2e2e2"></div><div class="mz" style="left:1035px;top:825px;width:15px;height:15px;background:#e6e6e6"></div><div class="mz" style="left:1050px;top:825px;width:15px;height:15px;background:#eeeeee"></div><div class="mz" style="left:1008px;top:840px;width:62px;height:15px;background:#fbfbfb"></div><div class="mz" style="left:1017.5px;top:655px;width:5px;height:30px;overflow:hidden;font-size:20px;line-height:30px;color:#555">1</div><div class="mz" style="left:1017.5px;top:708px;width:5px;height:30px;overflow:hidden;font-size:20px;line-height:30px;color:#555">1</div>
</div>
</body>
</html>
